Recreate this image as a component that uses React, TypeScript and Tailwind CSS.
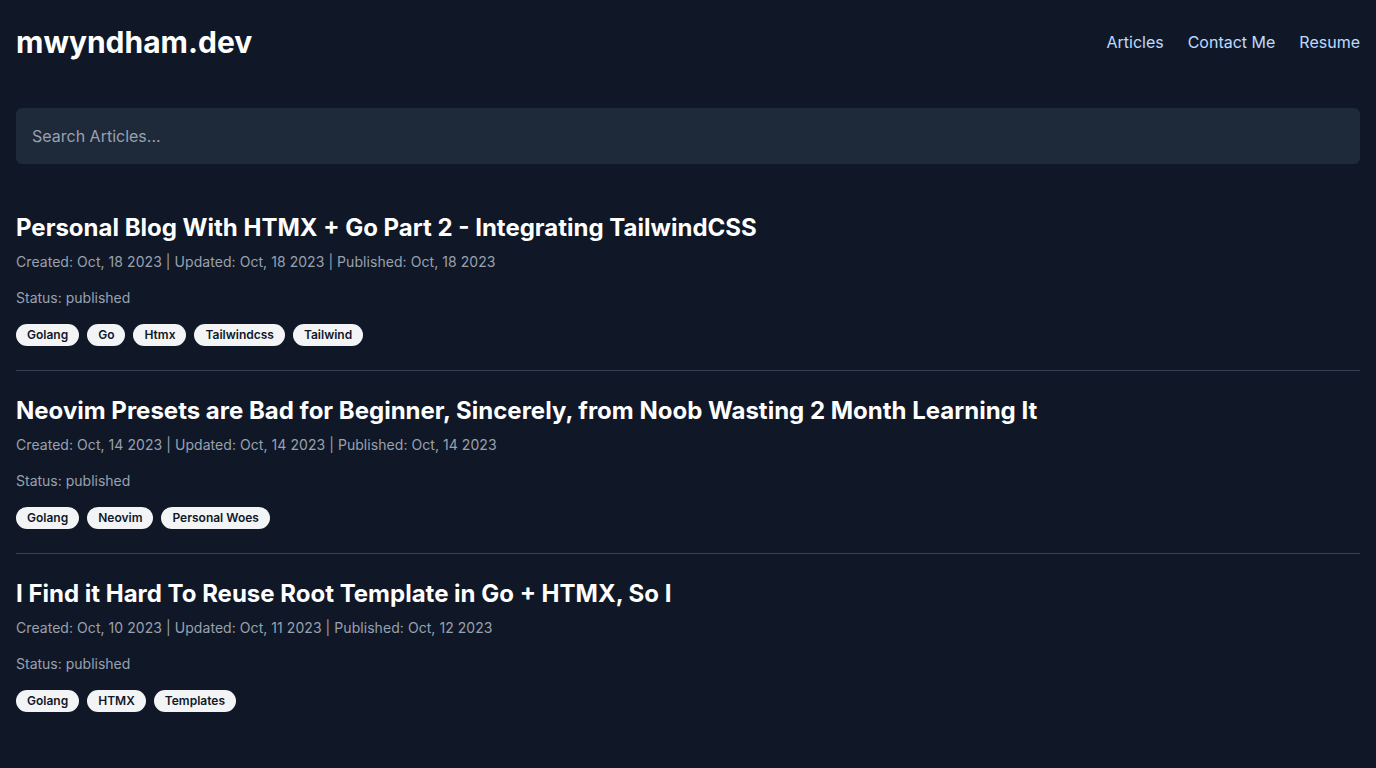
import React from "react";

type Article = {
  title: string;
  created: string;
  updated: string;
  published: string;
  status: string;
  tags: string[];
};

const articles: Article[] = [
  {
    title: "Personal Blog With HTMX + Go Part 2 - Integrating TailwindCSS",
    created: "Oct, 18 2023",
    updated: "Oct, 18 2023",
    published: "Oct, 18 2023",
    status: "published",
    tags: ["Golang", "Go", "Htmx", "Tailwindcss", "Tailwind"],
  },
  {
    title: "Neovim Presets are Bad for Beginner, Sincerely, from Noob Wasting 2 Month Learning It",
    created: "Oct, 14 2023",
    updated: "Oct, 14 2023",
    published: "Oct, 14 2023",
    status: "published",
    tags: ["Golang", "Neovim", "Personal Woes"],
  },
  {
    title: "I Find it Hard To Reuse Root Template in Go + HTMX, So I",
    created: "Oct, 10 2023",
    updated: "Oct, 11 2023",
    published: "Oct, 12 2023",
    status: "published",
    tags: ["Golang", "HTMX", "Templates"],
  },
];

function ArticleItem({ article, last }: { article: Article; last: boolean }) {
  return (
    <article className={`py-6 ${last ? "" : "border-b border-gray-700"}`}>
      <h2 className="text-2xl font-bold text-white">{article.title}</h2>
      <p className="mt-2 text-sm tracking-[0.004em] text-gray-400">
        Created: {article.created} | Updated: {article.updated} | Published: {article.published}
      </p>
      <p className="mt-4 text-sm text-gray-400">Status: {article.status}</p>
      <div className="mt-4 flex gap-2">
        {article.tags.map((tag) => (
          <span
            key={tag}
            className="rounded-full bg-gray-100 px-[11px] py-[3px] text-xs font-semibold text-gray-900"
          >
            {tag}
          </span>
        ))}
      </div>
    </article>
  );
}

export default function App() {
  return (
    <div
      className="min-h-screen bg-gray-900 px-4 pb-4 pt-6"
      style={{ fontFamily: "Inter, 'Noto Sans', sans-serif" }}
    >
      <header className="flex items-center justify-between">
        <h1 className="text-3xl font-bold text-white">mwyndham.dev</h1>
        <nav className="flex gap-6 text-base text-blue-200">
          <a href="#">Articles</a>
          <a href="#">Contact Me</a>
          <a href="#">Resume</a>
        </nav>
      </header>

      <div className="mt-12">
        <input
          type="text"
          placeholder="Search Articles..."
          className="h-14 w-full rounded-md bg-gray-800 px-4 text-base text-gray-200 placeholder-gray-400 outline-none"
        />
      </div>

      <main className="mt-6">
        {articles.map((a, i) => (
          <ArticleItem key={a.title} article={a} last={i === articles.length - 1} />
        ))}
      </main>
    </div>
  );
}
